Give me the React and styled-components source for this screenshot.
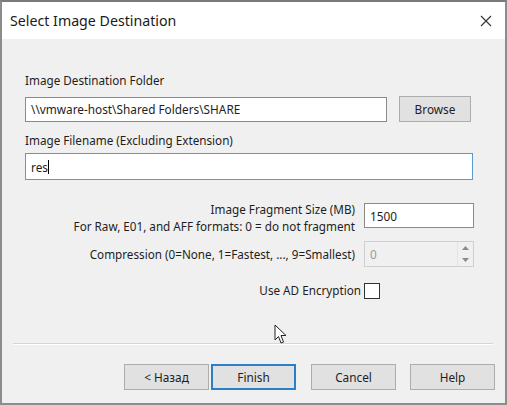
import React from 'react';
import styled, { createGlobalStyle } from 'styled-components';

const Global = createGlobalStyle`
  html, body { margin: 0; padding: 0; background: #f0f0f0; }
  body { font-family: "Noto Sans", "Open Sans", sans-serif; }
  * { box-sizing: border-box; }
`;

const Window = styled.div`
  position: relative;
  width: 507px;
  height: 405px;
  border: 2px solid #8c8c8c;
  border-top-color: #7a7a7a;
  background: #f0f0f0;
  display: flex;
  flex-direction: column;
  color: #1e1e1e;
  font-size: 11.7px;
`;

const TitleBar = styled.div`
  height: 37px;
  background: #fff;
  display: flex;
  align-items: center;
  justify-content: space-between;
  padding: 0 12px 0 8px;
`;

const Title = styled.div`
  font-size: 14.2px;
  color: #1a1a1a;
`;

const Close = styled.div`
  width: 14px;
  height: 14px;
  display: flex;
  align-items: center;
  justify-content: center;
`;

const Body = styled.div`
  flex: 1;
  display: flex;
  flex-direction: column;
  padding: 33px 0 0 23px;
`;

const Label = styled.div`
  height: 16px;
  line-height: 16px;
  margin-top: ${p => p.$top || 0}px;
`;

const Row = styled.div`
  display: flex;
  align-items: center;
  gap: 12px;
  margin-top: ${p => p.$top || 0}px;
`;

const TextBox = styled.div`
  width: ${p => p.$w}px;
  height: ${p => p.$h || 25}px;
  background: ${p => (p.$disabled ? '#f0f0f0' : '#fff')};
  border: 1px solid ${p => (p.$focus ? '#5a9ad4' : p.$disabled ? '#cfcfcf' : '#8a8a8a')};
  color: ${p => (p.$disabled ? '#9a9a9a' : '#1e1e1e')};
  display: flex;
  align-items: center;
  padding-left: 5px;
  margin-top: ${p => p.$top || 0}px;
  font-size: 11.8px;
`;

const Caret = styled.span`
  display: inline-block;
  width: 1px;
  height: 14px;
  background: #000;
`;

const Button = styled.div`
  width: ${p => p.$w || 85}px;
  height: 26px;
  background: #e1e1e1;
  border: ${p => (p.$default ? '2px solid #2b7fc8' : '1px solid #adadad')};
  display: flex;
  align-items: center;
  justify-content: center;
  font-size: 11.8px;
  color: #1e1e1e;
`;

const Options = styled.div`
  display: grid;
  grid-template-columns: 1fr 110px;
  column-gap: 9px;
  margin: 23px 31px 0 0;
  align-items: center;
`;

const RightLabel = styled.div`
  text-align: right;
  line-height: 17px;
  white-space: nowrap;
  margin-right: ${p => p.$tight || 0}px;
  margin-top: ${p => p.$mt || 0}px;
  align-self: ${p => (p.$start ? 'start' : 'center')};
`;

const Cell = styled.div`
  margin-top: ${p => p.$mt || 0}px;
  align-self: ${p => (p.$start ? 'start' : 'center')};
`;

const Spinner = styled.div`
  width: 110px;
  height: 26px;
  border: 1px solid #cfcfcf;
  background: #f0f0f0;
  display: flex;
  color: #9a9a9a;
  font-size: 11.8px;
`;

const SpinValue = styled.div`
  flex: 1;
  display: flex;
  align-items: center;
  padding-left: 5px;
`;

const SpinArrows = styled.div`
  width: 16px;
  display: flex;
  flex-direction: column;
  border-left: 1px solid #e4e4e4;
`;

const SpinArrow = styled.div`
  flex: 1;
  display: flex;
  align-items: center;
  justify-content: center;
`;

const Check = styled.div`
  width: 16px;
  height: 16px;
  background: #fff;
  border: 1px solid #333;
`;

const Separator = styled.div`
  height: 2px;
  margin: 44px 12px 0 -12px;
  border-top: 1px solid #d5d5d5;
  border-bottom: 1px solid #fff;
`;

const Buttons = styled.div`
  display: flex;
  justify-content: flex-end;
  margin: 19px 10px 0 0;
`;

const Cursor = styled.svg`
  position: absolute;
  left: 272px;
  top: 322px;
`;

export default function App() {
  return (
    <>
      <Global />
      <Window>
        <TitleBar>
          <Title>Select Image Destination</Title>
          <Close>
            <svg width="12" height="12" viewBox="0 0 12 12">
              <path d="M1 1L11 11M11 1L1 11" stroke="#333" strokeWidth="1.1" />
            </svg>
          </Close>
        </TitleBar>
        <Body>
          <Label>Image Destination Folder</Label>
          <Row $top={8}>
            <TextBox $w={362}>\\vmware-host\Shared Folders\SHARE</TextBox>
            <Button $w={72}>Browse</Button>
          </Row>
          <Label $top={10}>Image Filename (Excluding Extension)</Label>
          <TextBox $w={448} $h={27} $top={5} $focus>
            res<Caret />
          </TextBox>
          <Options>
            <RightLabel $start $mt={-2}>
              Image Fragment Size (MB)
              <br />
              For Raw, E01, and AFF formats: 0 = do not fragment
            </RightLabel>
            <Cell $start>
              <TextBox $w={110}>1500</TextBox>
            </Cell>
            <RightLabel $mt={6}>Compression (0=None, 1=Fastest, ..., 9=Smallest)</RightLabel>
            <Cell $mt={6}>
              <Spinner>
                <SpinValue>0</SpinValue>
                <SpinArrows>
                  <SpinArrow>
                    <svg width="7" height="4" viewBox="0 0 7 4">
                      <path d="M0 4L3.5 0L7 4Z" fill="#8a8a8a" />
                    </svg>
                  </SpinArrow>
                  <SpinArrow>
                    <svg width="7" height="4" viewBox="0 0 7 4">
                      <path d="M0 0L3.5 4L7 0Z" fill="#8a8a8a" />
                    </svg>
                  </SpinArrow>
                </SpinArrows>
              </Spinner>
            </Cell>
            <RightLabel $tight={-6} $mt={15}>Use AD Encryption</RightLabel>
            <Cell $mt={15}>
              <Check />
            </Cell>
          </Options>
          <Separator />
          <Buttons>
            <Button>&lt; Назад</Button>
            <Button $default style={{ marginLeft: 2 }}>Finish</Button>
            <Button style={{ marginLeft: 15 }}>Cancel</Button>
            <Button style={{ marginLeft: 14 }}>Help</Button>
          </Buttons>
        </Body>
        <Cursor width="14" height="21" viewBox="0 0 14 21">
          <path
            d="M1 1L1 16L4.5 12.5L7 19L9.5 18L7 11.5L12 11.5Z"
            fill="#fff"
            stroke="#222"
            strokeWidth="1"
            strokeLinejoin="round"
          />
        </Cursor>
      </Window>
    </>
  );
}
